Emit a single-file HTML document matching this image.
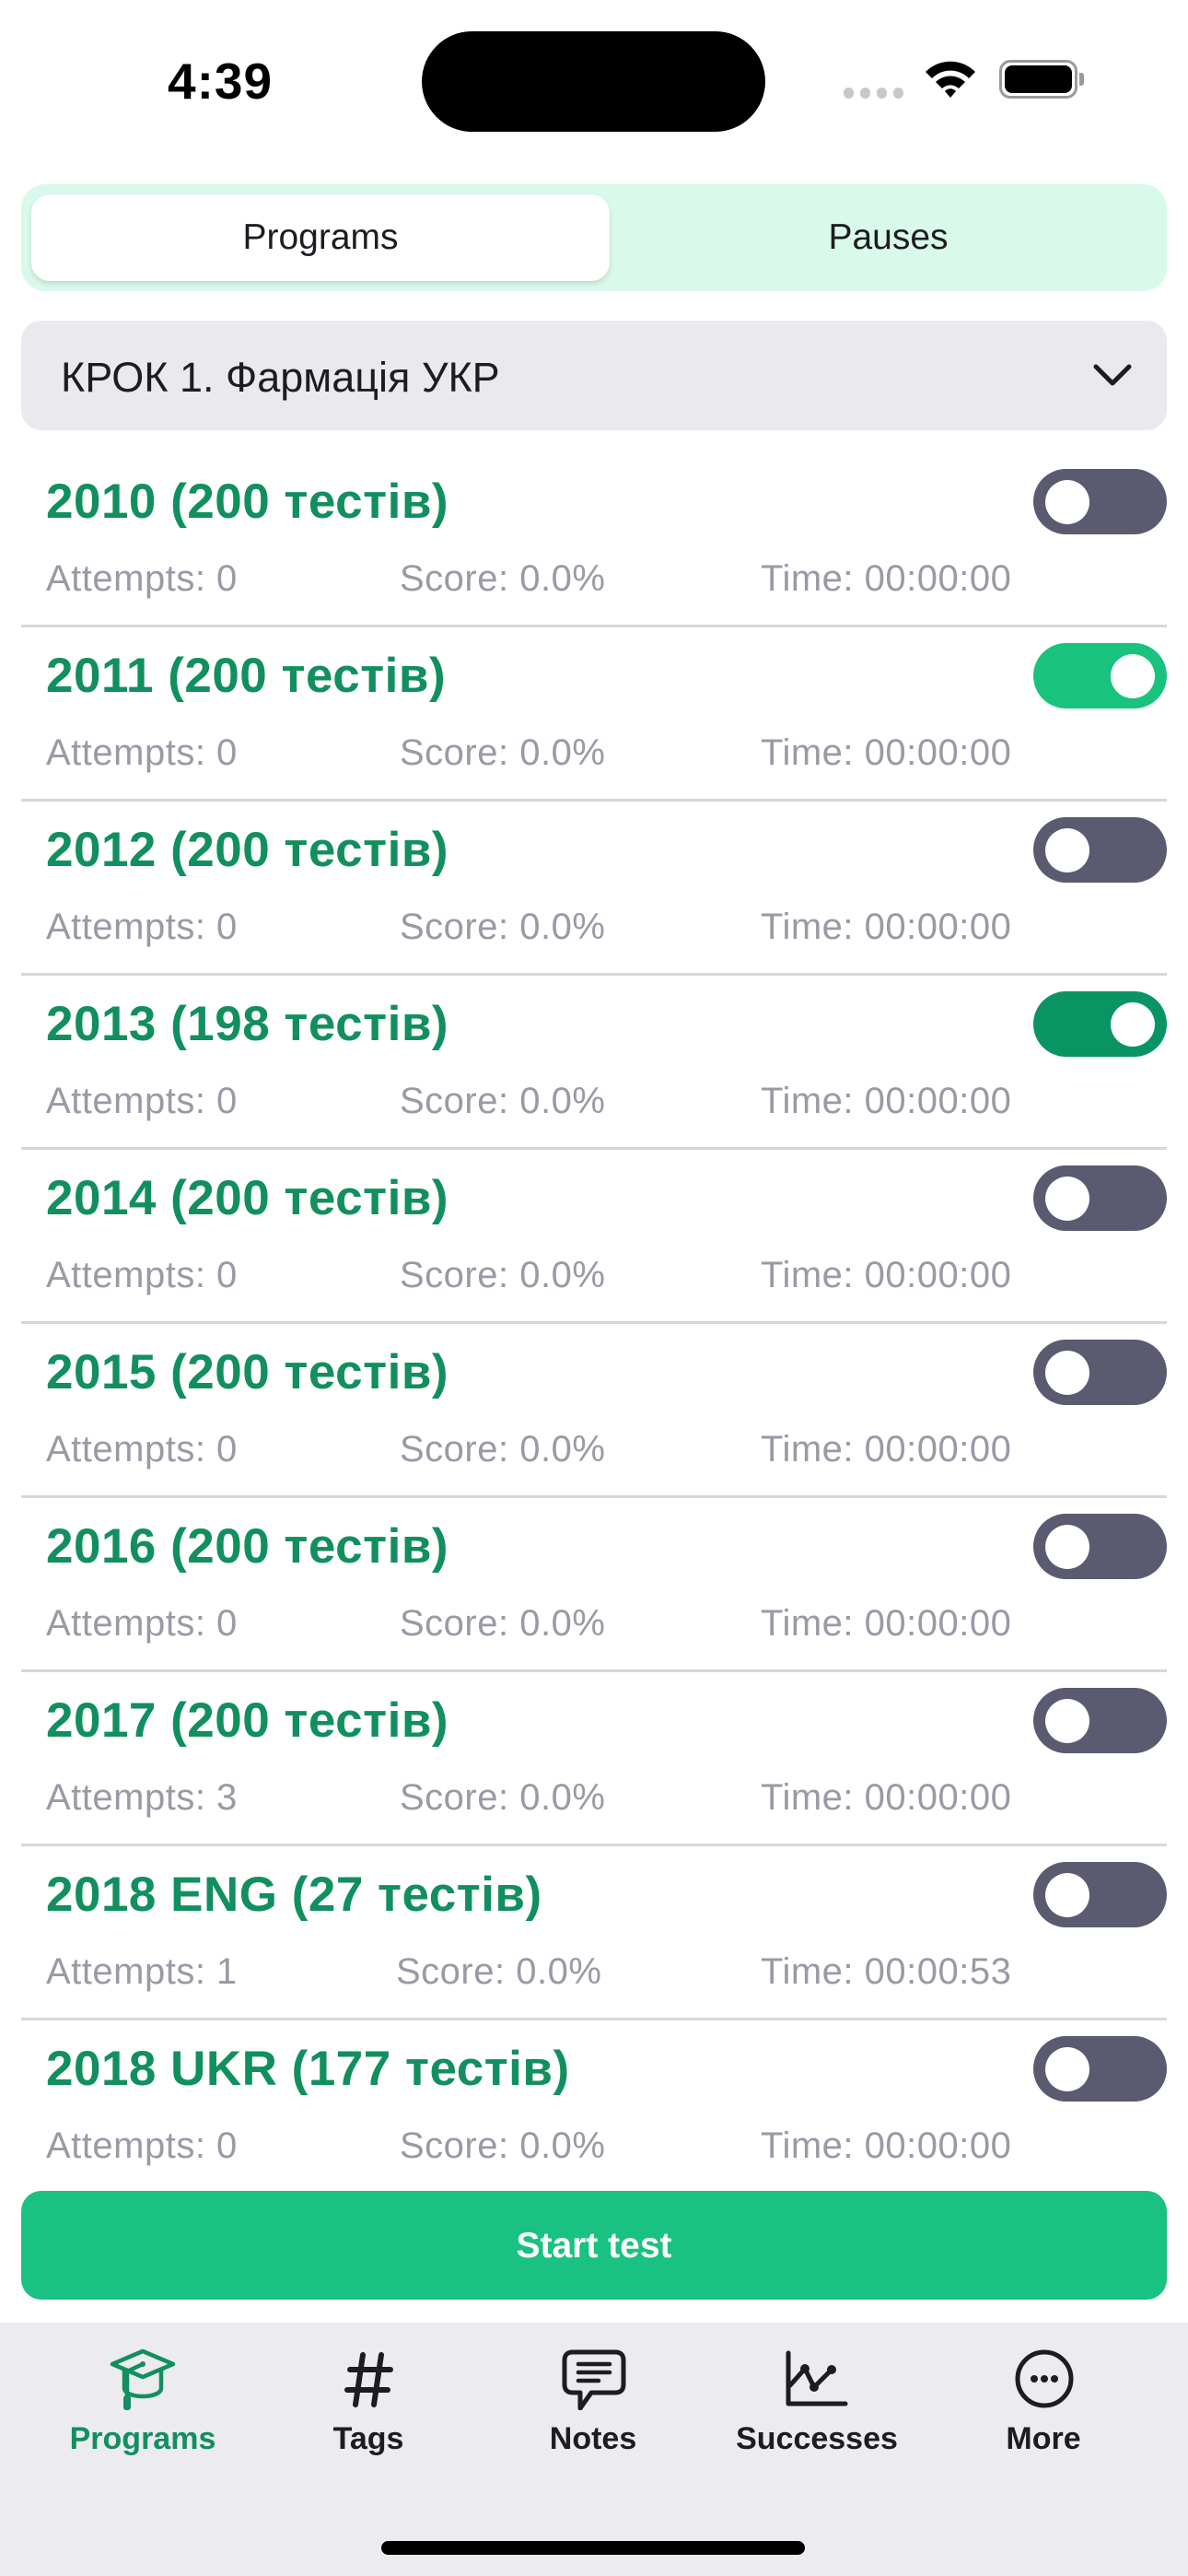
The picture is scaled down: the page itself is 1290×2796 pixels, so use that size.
<!DOCTYPE html>
<html><head><meta charset="utf-8"><style>
*{margin:0;padding:0;box-sizing:border-box}
body{width:1290px;height:2796px;background:#fff;position:relative;overflow:hidden;font-family:"Liberation Sans","Noto Sans CJK SC",sans-serif}
.a{position:absolute}
.title{position:absolute;left:50px;font-size:53px;font-weight:bold;color:#128f5f;line-height:1;letter-spacing:0.5px}
.st{position:absolute;font-size:40px;color:#9a99a6;line-height:1;letter-spacing:0.5px}
.tg{position:absolute;left:1122px;width:145px;height:71px;border-radius:36px;background:#5a5a71}
.tg::after{content:"";position:absolute;top:11.5px;left:13px;width:48px;height:48px;border-radius:50%;background:#fff}
.tg.on{background:#19c37d}.tg.on::after{left:84px}
.tg.on2{background:#0b9463}.tg.on2::after{left:84px}
.dv{position:absolute;left:23px;width:1244px;height:3px;background:#d6d6dc}
.lb{position:absolute;top:2628px;font-size:34px;font-weight:bold;color:#1c1c22;transform:translateX(-50%);white-space:nowrap}
</style></head><body>
<div class="a" style="left:182px;top:56px;font-size:55px;font-weight:bold;letter-spacing:1px">4:39</div>
<div class="a" style="left:458px;top:34px;width:373px;height:109px;border-radius:55px;background:#000"></div>
<div class="a" style="left:916px;top:95px;width:11px;height:12px;border-radius:6px;background:#c8c8cc"></div>
<div class="a" style="left:934px;top:95px;width:11px;height:12px;border-radius:6px;background:#c8c8cc"></div>
<div class="a" style="left:952px;top:95px;width:11px;height:12px;border-radius:6px;background:#c8c8cc"></div>
<div class="a" style="left:970px;top:95px;width:11px;height:12px;border-radius:6px;background:#c8c8cc"></div>
<svg class="a" style="left:1003px;top:64px" width="58" height="44" viewBox="0 0 58 44"><path d="M2 14 A38 38 0 0 1 56 14 L49 21 A28 28 0 0 0 9 21 Z" fill="#000"/><path d="M13 25 A23 23 0 0 1 45 25 L38 32 A13 13 0 0 0 20 32 Z" fill="#000"/><path d="M23 35 A8 8 0 0 1 35 35 L29 42 Z" fill="#000"/></svg>
<div class="a" style="left:1085px;top:65px;width:85px;height:42px;border:3px solid #9a9a9e;border-radius:12px"></div>
<div class="a" style="left:1091px;top:71px;width:73px;height:30px;border-radius:8px;background:#000"></div>
<div class="a" style="left:1172px;top:79px;width:5px;height:14px;border-radius:0 3px 3px 0;background:#9a9a9e"></div>

<div class="a" style="left:23px;top:200px;width:1244px;height:116px;border-radius:26px;background:#d9f9ea"></div>
<div class="a" style="left:34px;top:211px;width:628px;height:94px;border-radius:20px;background:#fff;box-shadow:0 3px 6px rgba(0,0,0,.12)"></div>
<div class="a" style="left:34px;top:236px;width:628px;text-align:center;font-size:39px;color:#1c1c22">Programs</div>
<div class="a" style="left:662px;top:236px;width:605px;text-align:center;font-size:39px;color:#1c1c22">Pauses</div>

<div class="a" style="left:23px;top:348px;width:1244px;height:119px;border-radius:22px;background:#e9e9ee"></div>
<div class="a" style="left:66px;top:384px;font-size:45px;color:#1c1c22">КРОК 1. Фармація УКР</div>
<svg class="a" style="left:1186px;top:392px" width="44" height="30" viewBox="0 0 44 30"><path d="M4 6 L22 24 L40 6" stroke="#1c1c22" stroke-width="5" fill="none" stroke-linecap="round" stroke-linejoin="round"/></svg>

<div class="title" style="top:518px">2010 (200 тестів)</div><div class="tg" style="top:509px"></div>
<div class="st" style="left:50px;top:608px">Attempts: 0</div><div class="st" style="left:434px;top:608px">Score: 0.0%</div><div class="st" style="left:826px;top:608px">Time: 00:00:00</div>
<div class="dv" style="top:678px"></div>

<div class="title" style="top:707px">2011 (200 тестів)</div><div class="tg on" style="top:698px"></div>
<div class="st" style="left:50px;top:797px">Attempts: 0</div><div class="st" style="left:434px;top:797px">Score: 0.0%</div><div class="st" style="left:826px;top:797px">Time: 00:00:00</div>
<div class="dv" style="top:867px"></div>

<div class="title" style="top:896px">2012 (200 тестів)</div><div class="tg" style="top:887px"></div>
<div class="st" style="left:50px;top:986px">Attempts: 0</div><div class="st" style="left:434px;top:986px">Score: 0.0%</div><div class="st" style="left:826px;top:986px">Time: 00:00:00</div>
<div class="dv" style="top:1056px"></div>

<div class="title" style="top:1085px">2013 (198 тестів)</div><div class="tg on2" style="top:1076px"></div>
<div class="st" style="left:50px;top:1175px">Attempts: 0</div><div class="st" style="left:434px;top:1175px">Score: 0.0%</div><div class="st" style="left:826px;top:1175px">Time: 00:00:00</div>
<div class="dv" style="top:1245px"></div>

<div class="title" style="top:1274px">2014 (200 тестів)</div><div class="tg" style="top:1265px"></div>
<div class="st" style="left:50px;top:1364px">Attempts: 0</div><div class="st" style="left:434px;top:1364px">Score: 0.0%</div><div class="st" style="left:826px;top:1364px">Time: 00:00:00</div>
<div class="dv" style="top:1434px"></div>

<div class="title" style="top:1463px">2015 (200 тестів)</div><div class="tg" style="top:1454px"></div>
<div class="st" style="left:50px;top:1553px">Attempts: 0</div><div class="st" style="left:434px;top:1553px">Score: 0.0%</div><div class="st" style="left:826px;top:1553px">Time: 00:00:00</div>
<div class="dv" style="top:1623px"></div>

<div class="title" style="top:1652px">2016 (200 тестів)</div><div class="tg" style="top:1643px"></div>
<div class="st" style="left:50px;top:1742px">Attempts: 0</div><div class="st" style="left:434px;top:1742px">Score: 0.0%</div><div class="st" style="left:826px;top:1742px">Time: 00:00:00</div>
<div class="dv" style="top:1812px"></div>

<div class="title" style="top:1841px">2017 (200 тестів)</div><div class="tg" style="top:1832px"></div>
<div class="st" style="left:50px;top:1931px">Attempts: 3</div><div class="st" style="left:434px;top:1931px">Score: 0.0%</div><div class="st" style="left:826px;top:1931px">Time: 00:00:00</div>
<div class="dv" style="top:2001px"></div>

<div class="title" style="top:2030px">2018 ENG (27 тестів)</div><div class="tg" style="top:2021px"></div>
<div class="st" style="left:50px;top:2120px">Attempts: 1</div><div class="st" style="left:430px;top:2120px">Score: 0.0%</div><div class="st" style="left:826px;top:2120px">Time: 00:00:53</div>
<div class="dv" style="top:2190px"></div>

<div class="title" style="top:2219px">2018 UKR (177 тестів)</div><div class="tg" style="top:2210px"></div>
<div class="st" style="left:50px;top:2309px">Attempts: 0</div><div class="st" style="left:434px;top:2309px">Score: 0.0%</div><div class="st" style="left:826px;top:2309px">Time: 00:00:00</div>

<div class="a" style="left:23px;top:2378px;width:1244px;height:118px;border-radius:22px;background:#19c182"></div>
<div class="a" style="left:23px;top:2416px;width:1244px;text-align:center;font-size:39px;font-weight:bold;color:#fff">Start test</div>

<div class="a" style="left:0;top:2521px;width:1290px;height:275px;background:#ebebf0"></div>
<svg class="a" style="left:118px;top:2548px" width="74" height="68" viewBox="0 0 74 68"><g fill="none" stroke="#128f5f" stroke-width="4.5" stroke-linecap="round" stroke-linejoin="round"><path d="M37 4 L70 18 L37 32 L4 18 Z"/><path d="M17 24 V44 C17 56 57 56 57 44 V24"/><path d="M37 18 L20 26 V60"/></g><circle cx="37" cy="18" r="3" fill="#128f5f"/><rect x="16" y="52" width="8" height="16" rx="3" fill="#128f5f"/></svg>
<svg class="a" style="left:372px;top:2552px" width="58" height="62" viewBox="0 0 58 62"><g stroke="#1c1c22" stroke-width="6" stroke-linecap="round"><path d="M22 4 L14 58"/><path d="M42 4 L34 58"/><path d="M8 20 H52"/><path d="M5 42 H49"/></g></svg>
<svg class="a" style="left:610px;top:2550px" width="70" height="66" viewBox="0 0 70 66"><path d="M12 3 H58 Q67 3 67 12 V38 Q67 47 58 47 H32 L20 64 V47 H12 Q3 47 3 38 V12 Q3 3 12 3 Z" fill="none" stroke="#1c1c22" stroke-width="5" stroke-linejoin="round"/><g stroke="#1c1c22" stroke-width="4.5" stroke-linecap="round"><path d="M18 16 H52"/><path d="M18 25 H52"/><path d="M18 34 H40"/></g></svg>
<svg class="a" style="left:852px;top:2551px" width="70" height="62" viewBox="0 0 70 62"><g fill="none" stroke="#1c1c22" stroke-width="5" stroke-linecap="round" stroke-linejoin="round"><path d="M4 3 V58 H66"/><path d="M6 38 L22 20 L32 40 L50 22"/></g><circle cx="22" cy="20" r="5" fill="#1c1c22"/><circle cx="32" cy="40" r="5" fill="#1c1c22"/><circle cx="51" cy="21" r="5" fill="#1c1c22"/></svg>
<svg class="a" style="left:1101px;top:2550px" width="66" height="64" viewBox="0 0 66 64"><ellipse cx="33" cy="32" rx="29" ry="29" fill="none" stroke="#1c1c22" stroke-width="5"/><circle cx="22" cy="32" r="4" fill="#1c1c22"/><circle cx="33" cy="32" r="4" fill="#1c1c22"/><circle cx="44" cy="32" r="4" fill="#1c1c22"/></svg>
<div class="lb" style="left:155px;color:#128f5f">Programs</div>
<div class="lb" style="left:400px">Tags</div>
<div class="lb" style="left:644px">Notes</div>
<div class="lb" style="left:887px">Successes</div>
<div class="lb" style="left:1133px">More</div>
<div class="a" style="left:414px;top:2758px;width:460px;height:15px;border-radius:8px;background:#000"></div>
</body></html>
